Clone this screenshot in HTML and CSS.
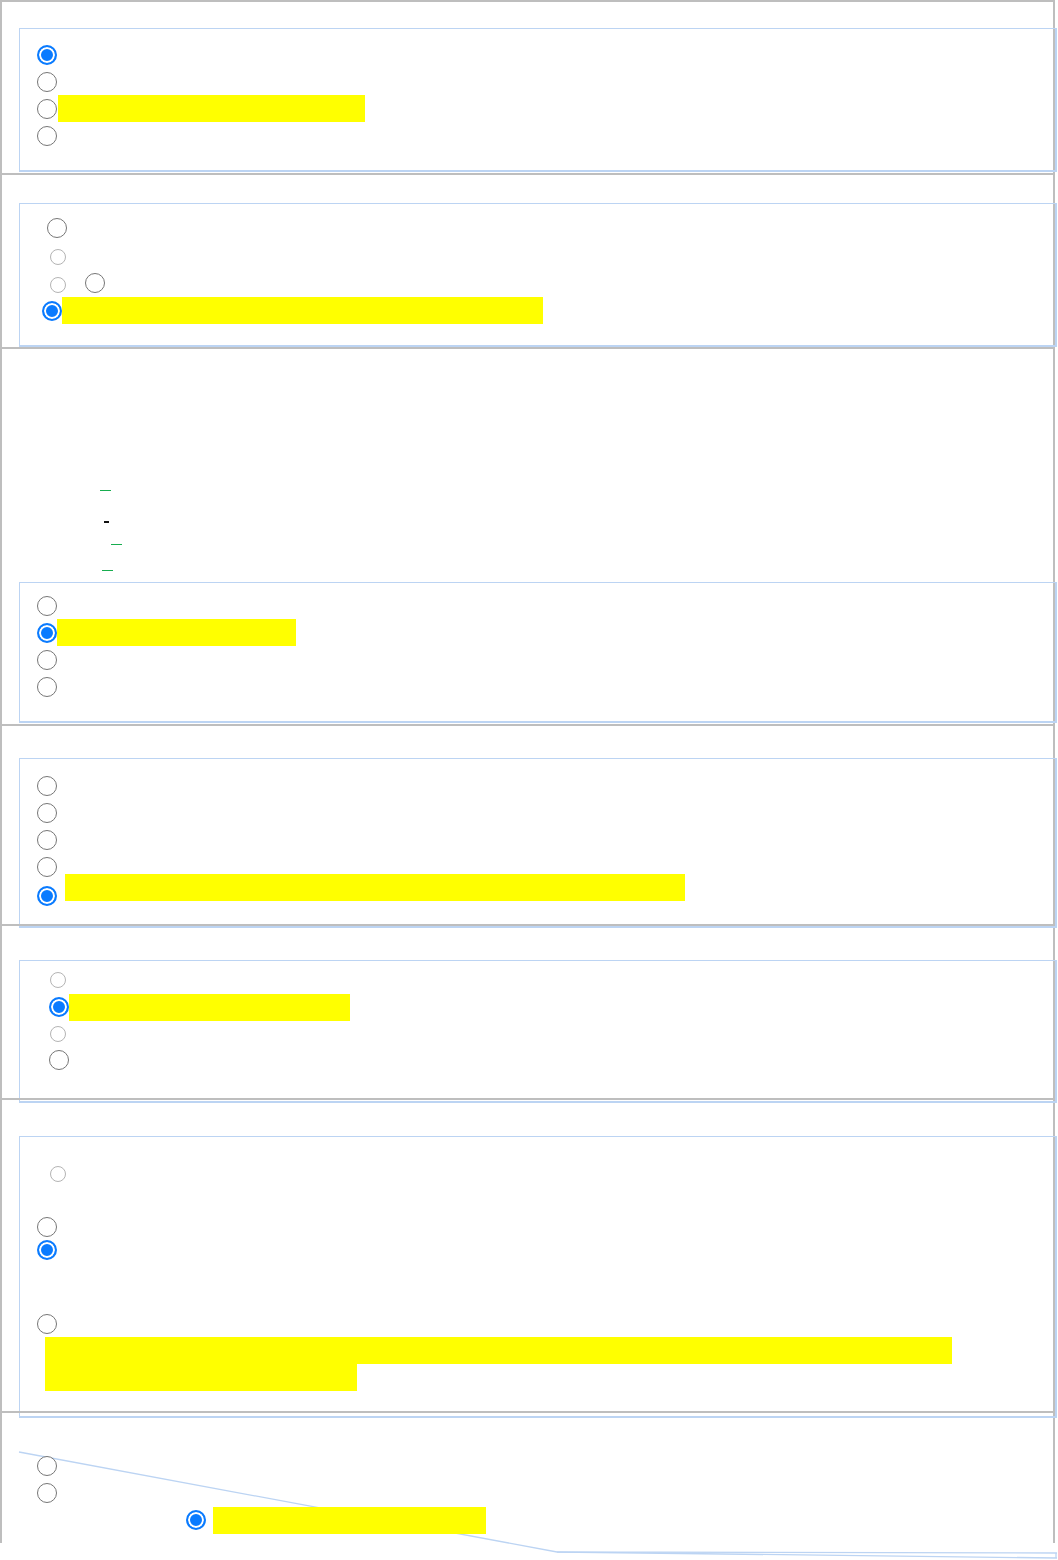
FILE: index.html
```html
<!DOCTYPE html>
<html lang="en">
<head>
<meta charset="utf-8">
<title>Quiz</title>
<link rel="stylesheet" href="styles.css">
</head>
<body>
<div class="page">
  <section class="q q1">
    <div class="box b1">
      <label class="opt"><input type="radio" class="r" name="q1" checked></label>
      <label class="opt"><input type="radio" class="r" name="q1"></label>
      <label class="opt"><input type="radio" class="r" name="q1"><span class="mk m1"></span></label>
      <label class="opt"><input type="radio" class="r" name="q1"></label>
    </div>
  </section>

  <section class="q q2">
    <div class="box b2">
      <label class="opt h28"><input type="radio" class="r ml10" name="q2"></label>
      <label class="opt h30"><input type="radio" class="r s16 ml13" name="q2" disabled></label>
      <label class="opt h25"><input type="radio" class="r s16 ml13" name="q2" disabled><input type="radio" class="r ml19 up2" name="q2x"></label>
      <label class="opt"><input type="radio" class="r ml5" name="q2" checked><span class="mk m2"></span></label>
    </div>
  </section>

  <section class="q q3">
    <div class="links">
      <a class="ln l1"></a>
      <span class="ln l2"></span>
      <a class="ln l3"></a>
      <a class="ln l4"></a>
    </div>
    <div class="box b3">
      <label class="opt"><input type="radio" class="r" name="q3"></label>
      <label class="opt"><input type="radio" class="r" name="q3" checked><span class="mk m3"></span></label>
      <label class="opt"><input type="radio" class="r" name="q3"></label>
      <label class="opt"><input type="radio" class="r" name="q3"></label>
    </div>
  </section>

  <section class="q q4">
    <div class="box b4">
      <label class="opt"><input type="radio" class="r" name="q4"></label>
      <label class="opt"><input type="radio" class="r" name="q4"></label>
      <label class="opt"><input type="radio" class="r" name="q4"></label>
      <label class="opt"><input type="radio" class="r" name="q4"></label>
      <label class="opt tall"><input type="radio" class="r" name="q4" checked><span class="mk m4"></span></label>
    </div>
  </section>

  <section class="q q5">
    <div class="box b5">
      <label class="opt h26"><input type="radio" class="r s16 ml13" name="q5" disabled></label>
      <label class="opt h28"><input type="radio" class="r ml12" name="q5" checked><span class="mk m5"></span></label>
      <label class="opt h26"><input type="radio" class="r s16 ml13" name="q5" disabled></label>
      <label class="opt h26"><input type="radio" class="r ml12" name="q5"></label>
    </div>
  </section>

  <section class="q q6">
    <div class="box b6">
      <label class="opt h26"><input type="radio" class="r s16 ml13" name="q6" disabled></label>
      <label class="opt h22 gap29"><input type="radio" class="r" name="q6"></label>
      <label class="opt h22 gap1"><input type="radio" class="r" name="q6" checked></label>
      <label class="opt h22 gap52"><input type="radio" class="r" name="q6"></label>
      <div class="mkblock"><span class="mkl w907"></span><span class="mkl w312"></span></div>
    </div>
  </section>

  <section class="q q7">
    <svg class="skew" width="1058" height="147" viewBox="0 0 1058 147" aria-hidden="true">
      <polyline points="19,39 557,139 1057,140" fill="none" stroke="#bcd4f3" stroke-width="1.3"/>
      <polyline points="557,139 1057,145" fill="none" stroke="#bcd4f3" stroke-width="1.3"/>
      <line x1="1056" y1="140" x2="1056" y2="145" stroke="#bcd4f3" stroke-width="1.3"/>
    </svg>
    <label class="opt"><input type="radio" class="r" name="q7"></label>
    <label class="opt"><input type="radio" class="r" name="q7"></label>
    <label class="opt h28"><input type="radio" class="r ml149" name="q7" checked><span class="mk m7"></span></label>
  </section>
</div>
</body>
</html>
```

FILE: styles.css
```css
html, body {
  margin: 0;
  padding: 0;
  background: #ffffff;
  overflow: hidden;
  font-family: "Liberation Sans", Arial, sans-serif;
  font-size: 16px;
}

body {
  min-height: 1560px;
}

.page {
  width: 1055px;
  box-sizing: border-box;
  border-left: 2px solid #bebebe;
  border-right: 2px solid #bebebe;
}

.q {
  position: relative;
  border-top: 2px solid #bebebe;
  padding-left: 17px;
}

.box {
  border: 1px solid #bcd4f3;
  border-right-width: 2px;
  border-bottom-width: 2px;
  margin-right: -4px;
  padding-left: 17px;
}

.opt {
  display: flex;
  align-items: center;
  height: 27px;
}

.r {
  -webkit-appearance: none;
  appearance: none;
  box-sizing: border-box;
  width: 20px;
  height: 20px;
  margin: 0;
  flex: none;
  border: 1.5px solid #767676;
  border-radius: 50%;
  background: #ffffff;
}
.r:checked {
  border: 2px solid #0a7bff;
  background: #0a7bff;
  box-shadow: inset 0 0 0 2px #ffffff;
}
.r:disabled {
  border-color: #b4b4b4;
}
.r.s16 { width: 16px; height: 16px; }

.ml5 { margin-left: 5px; }
.ml10 { margin-left: 10px; }
.ml12 { margin-left: 12px; }
.ml13 { margin-left: 13px; }
.ml19 { margin-left: 19px; }
.ml149 { margin-left: 149px; }
.up2 { margin-top: -4px; }

.h22 { height: 22px; }
.h25 { height: 25px; }
.h26 { height: 26px; }
.h28 { height: 28px; }
.h30 { height: 30px; }
.gap1 { margin-top: 1px; }
.gap29 { margin-top: 29px; }
.gap52 { margin-top: 52px; }

.mk {
  display: block;
  flex: none;
  height: 27px;
  background: #ffff00;
}
.m1 { width: 307px; margin-left: 1px; }
.m2 { width: 481px; }
.m3 { width: 239px; }
.m4 { width: 620px; margin-left: 8px; }
.m5 { width: 281px; }
.m7 { width: 273px; margin-left: 7px; }

/* section 1 */
.q1 { padding-top: 26px; padding-bottom: 1px; }
.b1 { padding-top: 12px; padding-bottom: 21px; }

/* section 2 */
.q2 { padding-top: 28px; }
.b2 { padding-top: 10px; padding-bottom: 21px; }

/* section 3 */
.q3 { padding-bottom: 1px; }
.links { display: flex; flex-direction: column; align-items: flex-start; }
.ln { display: block; }
.l1 { margin-top: 141px; margin-left: 81px; width: 11px; height: 1px; background: #17ad4f; }
.l2 { margin-top: 30px; margin-left: 85px; width: 5px; height: 2px; background: #111111; }
.l3 { margin-top: 21px; margin-left: 92px; width: 11px; height: 1px; background: #17ad4f; }
.l4 { margin-top: 25px; margin-left: 83px; width: 11px; height: 1px; background: #17ad4f; }
.b3 { margin-top: 11px; padding-top: 9px; padding-bottom: 21px; }

/* section 4 */
.q4 { padding-top: 32px; }
.b4 { padding-top: 13px; padding-bottom: 20px; margin-bottom: -4px; }
.opt.tall { align-items: flex-start; height: 32px; margin-top: -6px; }
.opt.tall .r { margin-top: 12px; }

/* section 5 */
.q5 { padding-top: 34px; }
.b5 { padding-top: 6px; padding-bottom: 28px; margin-bottom: -5px; }

/* section 6 */
.q6 { padding-top: 36px; }
.b6 { padding-top: 24px; padding-bottom: 25px; margin-bottom: -7px; }
.mkblock { margin-left: 8px; margin-top: 2px; }
.mkl { display: block; height: 27px; background: #ffff00; }
.w907 { width: 907px; }
.w312 { width: 312px; }

/* section 7 */
.q7 { padding: 39px 0 9px 35px; }
.q7 .opt { position: relative; }
.skew {
  position: absolute;
  left: -2px;
  top: 0;
  pointer-events: none;
  overflow: visible;
}
```
